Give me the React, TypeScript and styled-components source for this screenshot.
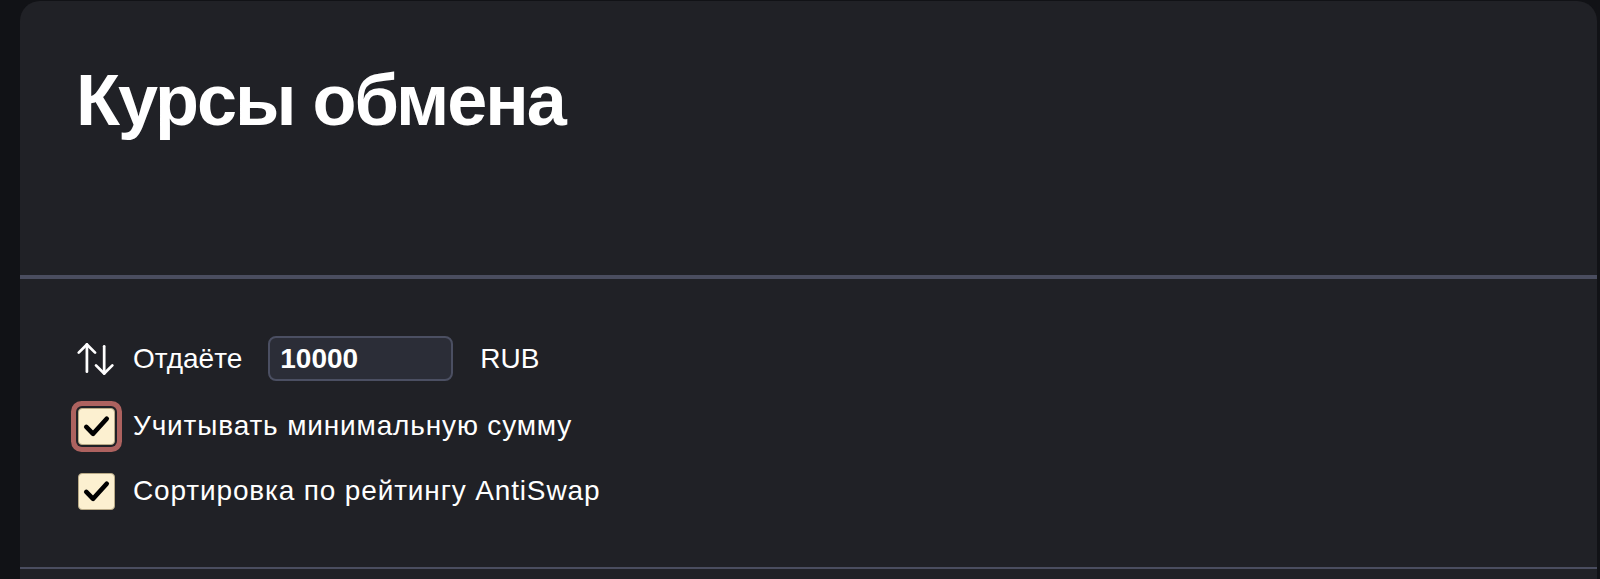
import React, { useState } from "react"
import styled, { createGlobalStyle } from "styled-components"

const GlobalStyle = createGlobalStyle`
  html, body {
    margin: 0;
    padding: 0;
    background: #111216;
    font-family: "Liberation Sans", Arial, sans-serif;
    color: #fff;
  }
`

const ArrowsIcon: React.FC = () => (
  <svg width="44" height="38" viewBox="0 0 44 38" fill="none" stroke="#fff" strokeWidth="3" strokeLinecap="round" strokeLinejoin="round">
    <path d="M12 3V33" />
    <path d="M3 12L12 3L21 12" />
    <path d="M31 5V35" />
    <path d="M22 26L31 35L40 26" />
  </svg>
)

const CheckIcon: React.FC = () => (
  <svg width="36" height="36" viewBox="0 0 36 36" fill="none" stroke="#000" strokeWidth="4.8" strokeLinecap="round" strokeLinejoin="round">
    <path d="M7.5 19L14.5 26L28.5 10.5" />
  </svg>
)

interface CheckboxRowProps {
  label: string
  checked: boolean
  focused?: boolean
  onToggle: () => void
}

const CheckboxRow: React.FC<CheckboxRowProps> = ({ label, checked, focused, onToggle }) => (
  <S.Row onClick={onToggle}>
    <S.IconSlot>
      <S.Box focused={!!focused}>{checked && <CheckIcon />}</S.Box>
    </S.IconSlot>
    <S.Label wide>{label}</S.Label>
  </S.Row>
)

const App: React.FC = () => {
  const [amount, setAmount] = useState("10000")
  const [useMin, setUseMin] = useState(true)
  const [byRating, setByRating] = useState(true)

  return (
    <>
      <GlobalStyle />
      <S.Panel>
        <S.Header>
          <S.Title>Курсы обмена</S.Title>
        </S.Header>
        <S.Controls>
          <S.Row>
            <S.IconSlot>
              <ArrowsIcon />
            </S.IconSlot>
            <S.Label>Отдаёте</S.Label>
            <S.AmountInput value={amount} onChange={(e) => setAmount(e.target.value)} />
            <S.Label>RUB</S.Label>
          </S.Row>
          <CheckboxRow
            label="Учитывать минимальную сумму"
            checked={useMin}
            focused
            onToggle={() => setUseMin(!useMin)}
          />
          <CheckboxRow
            label="Сортировка по рейтингу AntiSwap"
            checked={byRating}
            onToggle={() => setByRating(!byRating)}
          />
        </S.Controls>
        <S.Rest />
      </S.Panel>
    </>
  )
}

export default App

const S = {
  Panel: styled.div`
    margin: 1px 3px 0 20px;
    background: #202126;
    border-radius: 20px 20px 0 0;
    overflow: hidden;
  `,
  Header: styled.header`
    box-sizing: border-box;
    height: 278px;
    padding: 63px 56px 0;
    border-bottom: 4px solid #4a4d5f;
  `,
  Title: styled.h1`
    margin: 0;
    font-size: 72px;
    line-height: 1;
    font-weight: 700;
    letter-spacing: -2px;
    color: #fff;
  `,
  Controls: styled.section`
    display: flex;
    flex-direction: column;
    gap: 25px;
    padding: 57px 56px 56px;
    border-bottom: 2px solid #4a4d5f;
  `,
  Row: styled.div`
    display: flex;
    align-items: center;
    min-height: 40px;
    gap: 27px;
    cursor: pointer;
  `,
  IconSlot: styled.div`
    display: flex;
    align-items: center;
    justify-content: center;
    width: 40px;
    margin-right: -10px;
  `,
  Box: styled.div<{ focused: boolean }>`
    box-sizing: border-box;
    width: 37px;
    height: 37px;
    border: 1px solid #b9aa86;
    border-radius: 4px;
    background: #fcf0d0;
    display: flex;
    align-items: center;
    justify-content: center;
    box-shadow: ${({ focused }) => (focused ? "0 0 0 2px #202126, 0 0 0 7px #ad625f" : "none")};
  `,
  Label: styled.span<{ wide?: boolean }>`
    font-size: 28px;
    letter-spacing: ${({ wide }) => (wide ? "0.85px" : "0")};
    color: #fff;
    white-space: nowrap;
  `,
  AmountInput: styled.input`
    box-sizing: border-box;
    width: 185px;
    height: 45px;
    margin-left: -1px;
    padding: 0 10px;
    border: 2px solid #4b4f62;
    border-radius: 8px;
    background: #2b2d37;
    color: #fff;
    font-family: "Liberation Sans", Arial, sans-serif;
    font-size: 28px;
    font-weight: 700;
    outline: none;
  `,
  Rest: styled.div`
    height: 40px;
  `,
}
